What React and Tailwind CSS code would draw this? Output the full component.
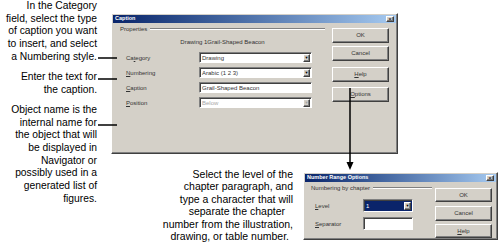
import React from 'react';

const raised =
  'border border-t-white border-l-white border-r-[#404040] border-b-[#404040] shadow-[inset_-1px_-1px_0_#808080]';
const sunken =
  'border border-t-[#808080] border-l-[#808080] border-r-white border-b-white shadow-[inset_1px_1px_0_#404040]';

function TitleBar({ title }) {
  return (
    <div className="mx-[1px] mt-[1px] h-[8px] flex items-center bg-linear-to-r from-[#0a246a] to-[#a6caf0] pl-[2px] pr-[2px]">
      <span className="flex-1 text-[5.5px] font-bold text-white leading-none">{title}</span>
      <span className={`w-[8px] h-[6px] bg-[#d4d0c8] ${raised} flex items-center justify-center text-[6px] leading-none text-black`}>
        ×
      </span>
    </div>
  );
}

function Button({ children, className = '' }) {
  return (
    <div
      className={`w-[57px] bg-[#d4d0c8] ${raised} flex items-center justify-center text-[6px] text-[#333] ${className}`}
    >
      {children}
    </div>
  );
}

function FixedLine({ label }) {
  return (
    <div className="h-[8px] flex items-center">
      <span className="text-[6px] text-[#333] leading-none">{label}</span>
      <div className="flex-1 ml-[3px] h-[2px] border-t border-t-[#808080] border-b border-b-white" />
    </div>
  );
}

function Field({ value, dropdown, disabled, className = '', selected }) {
  return (
    <div
      className={`${sunken} flex items-center ${selected ? 'bg-[#0a246a]' : 'bg-white'} ${className}`}
    >
      <span
        className={`flex-1 pl-[2px] text-[6px] leading-none ${
          selected ? 'text-white' : disabled ? 'text-[#a8a8a8]' : 'text-[#333]'
        }`}
      >
        {value}
      </span>
      {dropdown && (
        <span
          className={`w-[7px] h-[8px] mr-[1px] bg-[#d4d0c8] ${raised} flex items-center justify-center text-[4px] leading-none ${
            disabled ? 'text-[#a0a0a0]' : 'text-black'
          }`}
        >
          ▼
        </span>
      )}
    </div>
  );
}

function Label({ pre, u, post, className = '' }) {
  return (
    <span className={`text-[6px] text-[#333] leading-none ${className}`}>
      {pre}
      <span className="underline">{u}</span>
      {post}
    </span>
  );
}

// one callout line per row, right aligned, so the breaks match the figure
function Lines({ lines, className = '' }) {
  return (
    <div className={`whitespace-nowrap ${className}`}>
      {lines.map((l) => (
        <div key={l}>{l}</div>
      ))}
    </div>
  );
}

function CaptionDialog() {
  const rows = [
    { label: ['Ca', 't', 'egory'], value: 'Drawing', dropdown: true },
    { label: ['', 'N', 'umbering'], value: 'Arabic (1 2 3)', dropdown: true },
    { label: ['', 'C', 'aption'], value: 'Grail-Shaped Beacon' },
    { label: ['', 'P', 'osition'], value: 'Below', dropdown: true, disabled: true },
  ];
  return (
    <div className={`mt-[13px] w-[287px] h-[141px] bg-[#d4d0c8] ${raised}`}>
      <TitleBar title="Caption" />
      <div className="flex">
        <div className="w-[213px] pl-[8px]">
          <div className="mt-[2px]">
            <FixedLine label="Properties" />
          </div>
          <div className="mt-[5px] h-[8px] flex items-center justify-center text-[6px] text-[#333] leading-none">
            Drawing 1Grail-Shaped Beacon
          </div>
          <div className="mt-[6px] flex flex-col gap-[4px]">
            {rows.map((r) => (
              <div key={r.value} className="flex items-center h-[11px]">
                <Label className="w-[79px] pl-[6px]" pre={r.label[0]} u={r.label[1]} post={r.label[2]} />
                <Field
                  className="w-[113px] h-[11px]"
                  value={r.value}
                  dropdown={r.dropdown}
                  disabled={r.disabled}
                />
              </div>
            ))}
          </div>
        </div>
        <div className="ml-[7px] mt-[5px] flex flex-col">
          <Button className="h-[15px]">OK</Button>
          <Button className="h-[15px] mt-[3px]">Cancel</Button>
          <Button className="h-[15px] mt-[6px]">
            <span className="underline">H</span>elp
          </Button>
          <Button className="h-[15px] mt-[5px]">
            <span className="underline">O</span>ptions
          </Button>
        </div>
      </div>
    </div>
  );
}

function NumberRangeDialog() {
  return (
    <div className={`ml-[10px] mt-[4px] w-[195px] h-[68px] bg-[#d4d0c8] ${raised}`}>
      <TitleBar title="Number Range Options" />
      <div className="flex">
        <div className="w-[128px] pl-[7px]">
          <div className="mt-[2px]">
            <FixedLine label="Numbering by chapter" />
          </div>
          <div className="mt-[7px] flex items-center h-[13px]">
            <Label className="w-[52px] pl-[4px]" pre="" u="L" post="evel" />
            <Field className="w-[50px] h-[13px]" value="1" dropdown selected />
          </div>
          <div className="mt-[5px] flex items-center h-[13px]">
            <Label className="w-[52px] pl-[4px]" pre="" u="S" post="eparator" />
            <Field className="w-[50px] h-[13px]" value="" />
          </div>
        </div>
        <div className="ml-[3px] mt-[6px] flex flex-col">
          <Button className="h-[14px]">OK</Button>
          <Button className="h-[15px] mt-[4px]">Cancel</Button>
          <Button className="h-[14px] mt-[3px]">
            <span className="underline">H</span>elp
          </Button>
        </div>
      </div>
    </div>
  );
}

export default function App() {
  return (
    <div className="relative w-[500px] h-[249px] bg-white overflow-hidden flex font-['Liberation_Sans',Arial,sans-serif] text-black">
      {/* Callouts on the left */}
      <div className="w-[98px] shrink-0 flex flex-col items-end text-right text-[10.3px] leading-[12.7px] pr-[1px]">
        <Lines
          lines={[
            'In the Category',
            'field, select the type',
            'of caption you want',
            'to insert, and select',
            'a Numbering style.',
          ]}
        />
        <Lines className="mt-[7.5px]" lines={['Enter the text for', 'the caption.']} />
        <Lines
          className="mt-[7.5px]"
          lines={[
            'Object name is the',
            'internal name for',
            'the object that will',
            'be displayed in',
            'Navigator or',
            'possibly used in a',
            'generated list of',
            'figures.',
          ]}
        />
      </div>

      <div className="ml-[13px] flex flex-col">
        <CaptionDialog />
        <div className="mt-[14px] flex items-start">
          <div className="w-[182px] text-right text-[10.5px] leading-[12.4px] whitespace-nowrap">
            <div>Select the level of the</div>
            <div>chapter paragraph, and</div>
            <div>type a character that will</div>
            <div className="pr-[8px]">separate the chapter</div>
            <div>number from the illustration,</div>
            <div className="pr-[4px]">drawing, or table number.</div>
          </div>
          <NumberRangeDialog />
        </div>
      </div>

      {/* pointer lines and arrow */}
      <svg className="absolute inset-0 pointer-events-none" width="500" height="249">
        <line x1="98" y1="58" x2="117" y2="58" stroke="black" strokeWidth="1.5" />
        <line x1="98" y1="79" x2="117" y2="79" stroke="black" strokeWidth="1.5" />
        <line x1="98" y1="125" x2="117" y2="125" stroke="black" strokeWidth="1.5" />
        <line x1="350" y1="88" x2="350" y2="163" stroke="black" strokeWidth="1.5" />
        <polygon points="346.5,162 353.5,162 350,170" fill="black" />
      </svg>
    </div>
  );
}
